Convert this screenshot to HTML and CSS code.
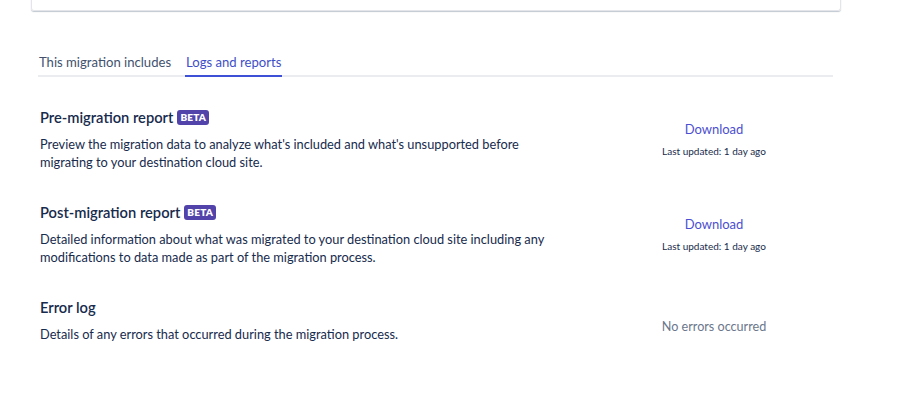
FILE: index.html
```html
<!DOCTYPE html>
<html>
<head>
<meta charset="utf-8">
<link rel="stylesheet" href="styles.css">
</head>
<body>
<div class="page">
  <div class="card"></div>
  <div class="content">
    <div class="tabs">
      <div class="tab">This migration includes</div>
      <div class="tab active">Logs and reports</div>
    </div>
    <div class="rows">
      <div class="row">
        <div class="info">
          <div class="title">Pre-migration report <span class="badge">BETA</span></div>
          <p class="desc">Preview the migration data to analyze what's included and what's unsupported before migrating to your destination cloud site.</p>
        </div>
        <div class="action">
          <a class="link">Download</a>
          <div class="meta">Last updated: 1 day ago</div>
        </div>
      </div>
      <div class="row">
        <div class="info">
          <div class="title">Post-migration report <span class="badge">BETA</span></div>
          <p class="desc">Detailed information about what was migrated to your destination cloud site including any modifications to data made as part of the migration process.</p>
        </div>
        <div class="action">
          <a class="link">Download</a>
          <div class="meta">Last updated: 1 day ago</div>
        </div>
      </div>
      <div class="row">
        <div class="info">
          <div class="title">Error log</div>
          <p class="desc">Details of any errors that occurred during the migration process.</p>
        </div>
        <div class="action low">
          <div class="muted">No errors occurred</div>
        </div>
      </div>
    </div>
  </div>
</div>
</body>
</html>
```
FILE: styles.css
```css
html, body {
  margin: 0;
  padding: 0;
  background: #ffffff;
}
body {
  font-family: Lato, "Open Sans", "Liberation Sans", sans-serif;
  color: #172b4d;
  font-size: 13px;
}
.page {
  width: 904px;
  height: 412px;
  overflow: hidden;
}
.card {
  margin: -20px 0 0 31px;
  width: 808px;
  height: 30px;
  border: 1px solid #e4e5ea;
  border-top: none;
  border-radius: 0 0 3px 3px;
  box-shadow: 0 1px 1px rgba(9, 30, 66, 0.25);
}
.content {
  margin: 41px 0 0 38px;
  width: 795px;
}
.tabs {
  display: flex;
  gap: 14px;
  border-bottom: 2px solid #ebecf0;
  height: 23px;
}
.tab {
  padding: 0 0 0 1px;
  line-height: 20px;
  color: #42526e;
  font-size: 13.1px;
  height: 23px;
  box-sizing: border-box;
}
.tab.active {
  color: #3e4ec8;
  border-bottom: 2px solid #3d50d6;
  height: 25px;
  padding: 0 1px 0 1px;
}
.rows {
  padding: 30px 0 0 2px;
  display: flex;
  flex-direction: column;
  gap: 31px;
}
.row {
  display: grid;
  grid-template-columns: 525px 1fr;
  column-gap: 30px;
}
.title {
  font-size: 14.7px;
  font-weight: 600;
  line-height: 20px;
  color: #172b4d;
  display: flex;
  align-items: center;
  gap: 4px;
}
.badge {
  background: #5243aa;
  color: #ffffff;
  font-size: 10px;
  font-weight: 800;
  line-height: 15px;
  padding: 0 3px;
  border-radius: 3px;
  letter-spacing: 0.2px;
}
.desc {
  margin: 8px 0 0 0;
  line-height: 18px;
  font-size: 12.8px;
  color: #172b4d;
}
.action {
  display: flex;
  flex-direction: column;
  align-items: center;
  justify-content: center;
}
.action.low {
  padding-top: 14px;
}
.link {
  color: #4c4fd1;
  font-size: 13px;
  line-height: 20px;
  cursor: pointer;
}
.meta {
  font-size: 10px;
  line-height: 14px;
  margin: 5px 0 2px 0;
  color: #172b4d;
}
.muted {
  color: #6b778c;
  font-size: 12.6px;
  line-height: 20px;
}
```
